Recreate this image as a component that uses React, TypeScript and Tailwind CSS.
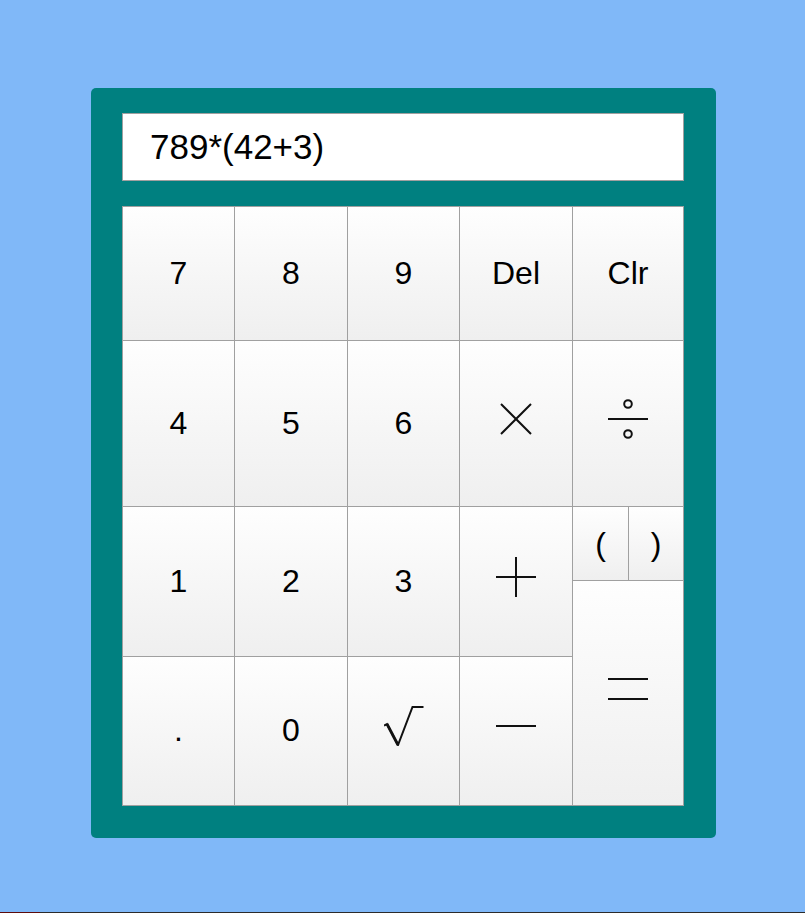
import React, { useState } from 'react';

type Key = {
  label: React.ReactNode;
  value: string;
  className?: string;
};

const cellBase =
  'flex items-center justify-center bg-linear-to-b from-[#fefefe] to-[#efefef] text-black select-none cursor-pointer';

const Icon = ({ children }: { children: React.ReactNode }) => (
  <svg width="40" height="40" viewBox="0 0 40 40" className="-translate-y-1" fill="none" stroke="#111" strokeWidth="2">
    {children}
  </svg>
);

const TimesIcon = () => (
  <Icon>
    <path d="M5 5 L35 35 M35 5 L5 35" />
  </Icon>
);

const DivideIcon = () => (
  <Icon>
    <path d="M0 20 H40" strokeWidth="2.2" />
    <circle cx="20" cy="5" r="3.8" />
    <circle cx="20" cy="35" r="3.8" />
  </Icon>
);

const PlusIcon = () => (
  <Icon>
    <path d="M0 20 H40 M20 0 V40" />
  </Icon>
);

const MinusIcon = () => (
  <Icon>
    <path d="M0 20 H40" strokeWidth="2.2" />
  </Icon>
);

const EqualsIcon = () => (
  <Icon>
    <path d="M0 10 H40 M0 30 H40" strokeWidth="2.2" />
  </Icon>
);

const SqrtIcon = () => (
  <Icon>
    <path d="M0 19.5 L3 18 L14 39 L28.5 1 H39.5" strokeLinejoin="miter" />
    <path d="M3 18 L14 39" strokeWidth="2.8" />
  </Icon>
);

export default function App() {
  const [expr, setExpr] = useState('789*(42+3)');

  const press = (v: string) => {
    if (v === 'del') return setExpr(expr.slice(0, -1));
    if (v === 'clr') return setExpr('');
    if (v === '=') {
      try {
        // eslint-disable-next-line no-new-func
        const r = Function(`return (${expr.replace(/√/g, 'Math.sqrt')})`)();
        setExpr(String(r));
      } catch {
        setExpr('Error');
      }
      return;
    }
    setExpr(expr + v);
  };

  const keys: Key[] = [
    { label: '7', value: '7' },
    { label: '8', value: '8' },
    { label: '9', value: '9' },
    { label: 'Del', value: 'del' },
    { label: 'Clr', value: 'clr' },
    { label: '4', value: '4' },
    { label: '5', value: '5' },
    { label: '6', value: '6' },
    { label: <TimesIcon />, value: '*' },
    { label: <DivideIcon />, value: '/' },
    { label: '1', value: '1', className: 'row-span-2' },
    { label: '2', value: '2', className: 'row-span-2' },
    { label: '3', value: '3', className: 'row-span-2' },
    { label: <PlusIcon />, value: '+', className: 'row-span-2' },
  ];

  const lastRow: Key[] = [
    { label: '.', value: '.' },
    { label: '0', value: '0' },
    { label: <SqrtIcon />, value: '√(' },
    { label: <MinusIcon />, value: '-' },
  ];

  return (
    <div className="w-full bg-[#80b8f8] font-['Liberation_Sans',Arial,sans-serif]">
      <div className="h-[912px] pt-[88px]">
        <div className="ml-[91px] w-[625px] h-[750px] rounded-[5px] bg-[#008080] pt-[25px] pl-[31px]">
          <div className="w-[562px] h-[68px] border border-[#a0a0a0] bg-white flex items-center pl-[27px] text-[35px] text-black">
            {expr}
          </div>

          <div className="mt-[25px] w-[562px] h-[600px] grid grid-cols-[111px_112px_111px_112px_110px] grid-rows-[133px_165px_73px_75px_148px] gap-px p-px bg-[#a0a0a0] text-[32px] leading-none">
            {keys.map((k, i) => (
              <div key={i} className={`${cellBase} ${k.className ?? ''}`} onClick={() => press(k.value)}>
                <span className="-translate-y-px">{k.label}</span>
              </div>
            ))}

            <div className="grid grid-cols-[55px_54px] gap-px bg-[#a0a0a0]">
              <div className={cellBase} onClick={() => press('(')}>(</div>
              <div className={cellBase} onClick={() => press(')')}>)</div>
            </div>

            {lastRow.map((k, i) => (
              <div key={i} className={`${cellBase} row-start-5`} style={{ gridColumnStart: i + 1 }} onClick={() => press(k.value)}>
                <span className="-translate-y-px">{k.label}</span>
              </div>
            ))}

            <div className={`${cellBase} col-start-5 row-start-4 row-span-2`} onClick={() => press('=')}>
              <EqualsIcon />
            </div>
          </div>
        </div>
      </div>
      <div className="flex h-px">
        <div className="w-[40px] bg-[#5c0b0b]" />
        <div className="flex-1 bg-[#2b2b2b]" />
      </div>
    </div>
  );
}
